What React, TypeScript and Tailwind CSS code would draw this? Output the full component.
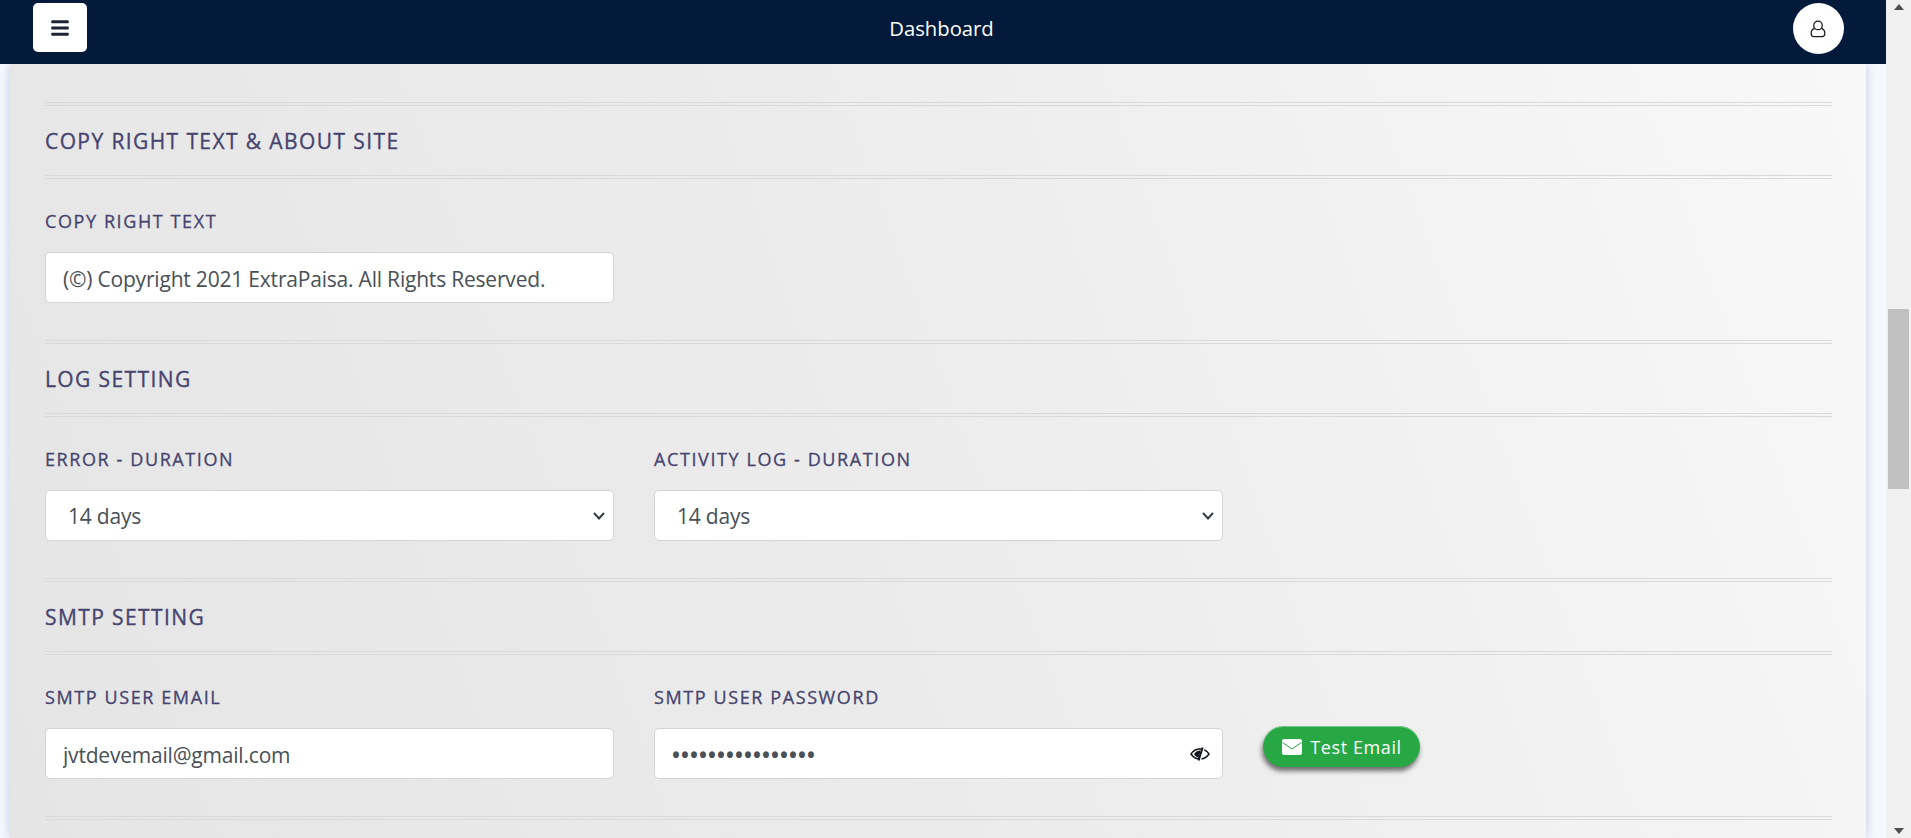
import React from "react";
import { FaBars } from "react-icons/fa";

const font = "font-['Open_Sans','Noto_Sans',sans-serif]";

function Rule() {
  return <div className="h-1 border-y border-[#d9d9d9] shrink-0" />;
}

function Heading({ children }: { children: React.ReactNode }) {
  return (
    <div className="h-[69px] pt-[3px] flex items-center text-[21px] tracking-[1.4px] text-[#46446f] [-webkit-text-stroke:0.35px_#46446f]">
      {children}
    </div>
  );
}

function Label({ children }: { children: React.ReactNode }) {
  return (
    <div className="h-6 flex items-center text-[18px] tracking-[1.6px] text-[#46446f] [-webkit-text-stroke:0.3px_#46446f] mb-[19px]">
      {children}
    </div>
  );
}

const inputCls =
  "w-full h-[51px] bg-white border border-[#d4d4d4] rounded-[5px] text-[21px] tracking-[-0.2px] text-[#495057] outline-none";

function DurationSelect() {
  return (
    <div className="relative">
      <select className={`${inputCls} appearance-none pl-[22px] pr-8 pt-[3px]`} defaultValue="14 days">
        <option>14 days</option>
      </select>
      <svg className="absolute right-[8px] top-[20px] pointer-events-none" width="14" height="12" viewBox="0 0 14 12" fill="none">
        <path d="M2 3 L7 8.5 L12 3" stroke="#343a40" strokeWidth="2" />
      </svg>
    </div>
  );
}

function UserIcon() {
  return (
    <svg width="16" height="18" viewBox="0 0 18 20" fill="none" stroke="#1a1a1a" strokeWidth="1.4">
      <circle cx="9" cy="6" r="4.8" />
      <path d="M5.3 9.2 C2.6 10 1.3 12 1.3 15 C1.3 17.6 2.4 18.6 4.5 18.6 H13.5 C15.6 18.6 16.7 17.6 16.7 15 C16.7 12 15.4 10 12.7 9.2" />
    </svg>
  );
}

function EyeOff() {
  return (
    <svg width="20" height="14" viewBox="0 0 20 14">
      <path d="M1 7 C3.4 3.4 6.4 2 10 2 C13.6 2 16.6 3.4 19 7 C16.6 10.6 13.6 12 10 12 C6.4 12 3.4 10.6 1 7 Z" fill="none" stroke="#14161d" strokeWidth="1.5" />
      <path d="M4 7 C5.4 4.8 7.4 3.6 10.5 3.4 L9 10.7 C6.8 10.4 5.2 9.2 4 7 Z" fill="#14161d" />
      <path d="M14.2 0.5 L10.2 13.5" stroke="#ffffff" strokeWidth="1.6" />
      <path d="M12.6 0.5 L8.6 13.5" stroke="#14161d" strokeWidth="2" />
    </svg>
  );
}

function Mail() {
  return (
    <svg width="20" height="16" viewBox="0 0 20 16">
      <rect width="20" height="16" rx="2" fill="#fff" />
      <path d="M0.5 3.5 L10 10 L19.5 3.5" fill="none" stroke="#28a745" strokeWidth="1" />
    </svg>
  );
}

export default function App() {
  return (
    <div className={`${font} h-screen w-full flex overflow-hidden bg-[#f5f9ff]`}>
      <div className="flex-1 min-w-0 flex flex-col">
        <header className="h-16 shrink-0 bg-[#031a3a] flex items-start justify-between pt-[3px] pl-[33px] pr-[42px] relative z-10">
          <button className="w-[54px] h-[49px] bg-white rounded-[5px] flex items-center justify-center text-[#1d2331]">
            <FaBars size={20} />
          </button>
          <div className="text-white text-[20.25px] leading-[50px] pl-[3px]">Dashboard</div>
          <div className="w-[51px] h-[51px] rounded-full bg-white flex items-center justify-center">
            <UserIcon />
          </div>
        </header>
        <div className="flex-1 min-h-0 overflow-hidden pl-[10px] pr-[20px]">
          <div className="h-full bg-linear-[70deg,#e5e5e5_0%,#ececec_50%,#f8f8f8_100%] shadow-[0_0_10px_rgba(120,130,170,0.4)] pl-[35px] pr-[34px] pt-[38px]">
            <Section title="COPY RIGHT TEXT & ABOUT SITE">
              <div className="grid grid-cols-3 gap-x-10">
                <div>
                  <Label>COPY RIGHT TEXT</Label>
                  <input className={`${inputCls} pl-[17px] pt-[2px]`} readOnly value="(©) Copyright 2021 ExtraPaisa. All Rights Reserved." />
                </div>
              </div>
            </Section>
            <Section title="LOG SETTING">
              <div className="grid grid-cols-3 gap-x-10">
                <div>
                  <Label>ERROR - DURATION</Label>
                  <DurationSelect />
                </div>
                <div>
                  <Label>ACTIVITY LOG - DURATION</Label>
                  <DurationSelect />
                </div>
              </div>
            </Section>
            <Section title="SMTP SETTING">
              <div className="grid grid-cols-3 gap-x-10">
                <div>
                  <Label>SMTP USER EMAIL</Label>
                  <input className={`${inputCls} pl-[17px] pt-[2px]`} readOnly value="jvtdevemail@gmail.com" />
                </div>
                <div>
                  <Label>SMTP USER PASSWORD</Label>
                  <div className="relative">
                    <input className={`${inputCls} pl-[17px] pr-10 pt-[2px] font-bold tracking-[1.1px]`} type="password" readOnly value="jvtdevemail12345" />
                    <div className="absolute right-[13px] top-[19px]"><EyeOff /></div>
                  </div>
                </div>
                <div className="flex items-end">
                  <button className="h-[41px] w-[157px] mb-[12px] pt-[1px] pl-[1px] rounded-full bg-[#28a745] text-white text-[18px] tracking-[0.6px] flex items-center justify-center gap-[8px] shadow-[-1px_4px_5px_rgba(0,0,0,0.55),inset_0_1px_0_rgba(150,220,170,0.7)]">
                    <Mail />
                    Test Email
                  </button>
                </div>
              </div>
            </Section>
            <Rule />
          </div>
        </div>
      </div>
      <div className="w-[25px] shrink-0 bg-[#f1f1f1] flex flex-col items-center">
        <svg className="mt-[3px]" width="12" height="8" viewBox="0 0 12 8"><path d="M6 1 L11 7 H1 Z" fill="#505050" /></svg>
        <div className="w-[21px] h-[180px] bg-[#c1c1c1] mt-[298px]" />
        <div className="flex-1" />
        <svg className="mb-[3px]" width="12" height="8" viewBox="0 0 12 8"><path d="M1 1 H11 L6 7 Z" fill="#505050" /></svg>
      </div>
    </div>
  );
}

function Section({ title, children }: { title: string; children: React.ReactNode }) {
  return (
    <section className="h-[238px]">
      <Rule />
      <Heading>{title}</Heading>
      <Rule />
      <div className="pt-[30px]">{children}</div>
    </section>
  );
}
